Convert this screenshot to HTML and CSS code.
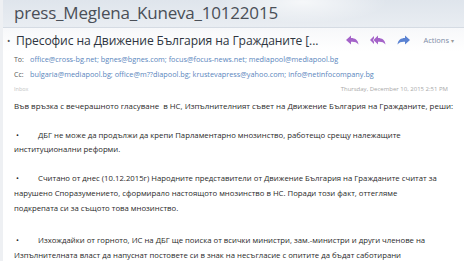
FILE: index.html
```html
<!DOCTYPE html>
<html>
<head>
<meta charset="utf-8">
<link rel="stylesheet" href="styles.css">
</head>
<body>
<div class="page">
  <header class="top">
    <div class="title">press_Meglena_Kuneva_10122015</div>
  </header>
  <div class="subject-row">
    <span class="dot">•</span>
    <span class="subject">Пресофис на Движение България на Гражданите [...</span>
    <span class="icons">
      <svg class="ic" width="13" height="10" viewBox="0 0 13 10"><path d="M0 5 L5 0.5 L5 3 C9 3 12 5 12.5 9.5 C10.5 7 8 6.5 5 6.8 L5 9.5 Z" fill="#a463c9"/></svg>
      <svg class="ic" width="16" height="10" viewBox="0 0 16 10"><path d="M0 5 L4 1 L4 3.3 L3 5 L4 6.7 L4 9 Z" fill="#a463c9"/><path d="M3.5 5 L8 0.5 L8 3 C12 3 15 5 15.5 9.5 C13.5 7 11 6.5 8 6.8 L8 9.5 Z" fill="#a463c9"/></svg>
      <svg class="ic" width="13" height="10" viewBox="0 0 13 10"><path d="M13 5 L8 0.5 L8 3 C4 3 1 5 0.5 9.5 C2.5 7 5 6.5 8 6.8 L8 9.5 Z" fill="#5a82d2"/></svg>
      <span class="actions">Actions <span class="caret">▾</span></span>
    </span>
  </div>
  <div class="addr"><span class="lbl">To:</span><span class="mails">office@cross-bg.net; bgnes@bgnes.com; focus@focus-news.net; mediapool@mediapool.bg</span></div>
  <div class="addr"><span class="lbl">Cc:</span><span class="mails">bulgaria@mediapool.bg; office@m??diapool.bg; krustevapress@yahoo.com; info@netinfocompany.bg</span></div>
  <div class="meta"><span class="folder">Inbox</span><span class="date">Thursday, December 10, 2015 2:51 PM</span></div>
  <div class="body">
    <p class="intro">Във връзка с вечерашното гласуване&nbsp; в НС, Изпълнителният съвет на Движение България на Гражданите, реши:</p>
    <p class="item"><span class="b">•</span>ДБГ не може да продължи да крепи Парламентарно мнозинство, работещо срещу належащите<br>институционални реформи.</p>
    <p class="item"><span class="b">•</span>Считано от днес (10.12.2015г) Народните представители от Движение България на Гражданите считат за<br>нарушено Споразумението, сформирало настоящото мнозинство в НС. Поради този факт, оттегляме<br>подкрепата си за същото това мнозинство.</p>
    <p class="item last"><span class="b">•</span>Изхождайки от горното, ИС на ДБГ ще поиска от всички министри, зам.-министри и други членове на<br>Изпълнителната власт да напуснат постовете си в знак на несъгласие с опитите да бъдат саботирани</p>
  </div>
</div>
</body>
</html>
```
FILE: styles.css
```css
html, body {
  margin: 0;
  padding: 0;
  background: #ffffff;
}
body {
  font-family: "Open Sans", "Noto Sans", sans-serif;
  color: #333;
  overflow: hidden;
  width: 464px;
  height: 261px;
}
.page {
  width: 464px;
  height: 261px;
  border-left: 3px solid #eef0f3;
  box-sizing: border-box;
}
.top {
  height: 28px;
  box-sizing: border-box;
  border-bottom: 1px solid #d5dbe3;
  background:
    radial-gradient(ellipse 120px 30px at 300px 2px, rgba(255,255,255,0.7), rgba(255,255,255,0) 70%),
    linear-gradient(180deg, #dfe5ec 0%, #e9edf2 100%);
  padding-left: 11px;
}
.title {
  font-size: 17px;
  line-height: 24px;
  color: #4a4f57;
  letter-spacing: -0.2px;
  padding-top: 1px;
}
.subject-row {
  display: flex;
  align-items: center;
  height: 24px;
  padding-left: 4px;
  background: linear-gradient(180deg, #f7f8fa 0%, #ffffff 100%);
}
.dot {
  font-size: 9px;
  color: #555;
  width: 9px;
}
.subject {
  font-size: 12.1px;
  color: #2e3540;
  letter-spacing: -0.1px;
}
.icons {
  margin-left: auto;
  display: flex;
  align-items: center;
  gap: 11px;
  padding-right: 10px;
}
.ic {
  display: block;
}
.actions {
  font-size: 7.5px;
  color: #7d8ca6;
  margin-left: 2px;
}
.caret {
  font-size: 6px;
  color: #999;
}
.addr {
  display: flex;
  font-size: 7.5px;
  line-height: 15px;
  padding-left: 11px;
  white-space: nowrap;
}
.lbl {
  color: #555;
  width: 16px;
  font-size: 7px;
}
.mails {
  color: #5a86bd;
  font-size: 7.3px;
}
.meta {
  display: flex;
  justify-content: space-between;
  font-size: 6px;
  line-height: 14px;
  padding: 0 16px 0 11px;
  color: #a8a8a8;
}
.folder {
  color: #c4c4c4;
  font-size: 5.5px;
}
.body {
  padding-left: 11px;
  font-size: 7.75px;
  line-height: 14.7px;
  color: #2a2a2a;
  padding-top: 3px;
}
.body p {
  margin: 0;
  white-space: nowrap;
}
.intro {
  font-size: 7.9px;
  margin-bottom: 14px !important;
}
.item {
  margin-bottom: 14px !important;
}
.last {
  margin-top: 18px !important;
}
.b {
  display: inline-block;
  width: 22px;
  padding-left: 2px;
}
```
